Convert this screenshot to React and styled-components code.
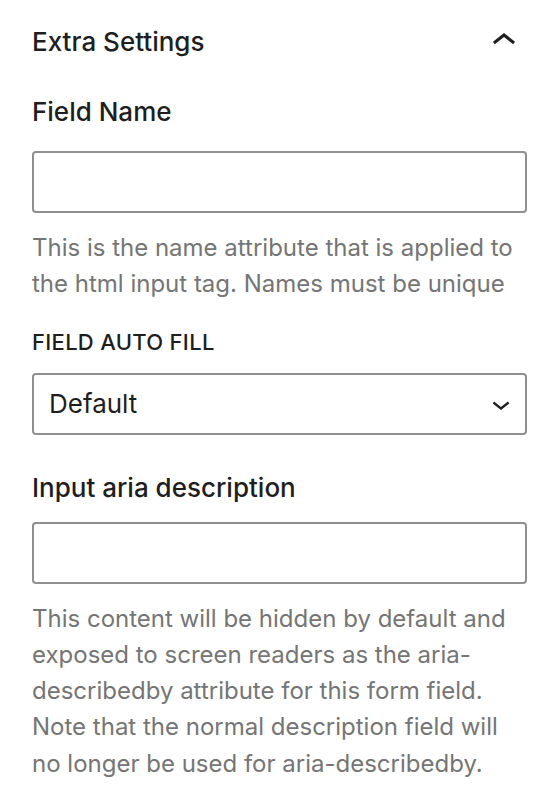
import React from 'react';
import styled, { createGlobalStyle } from 'styled-components';

/****** Global */

const GlobalStyle = createGlobalStyle`
  html, body {
    margin : 0;
    padding : 0;
    background : #ffffff;
  }
  body {
    font-family : Inter, "Liberation Sans", sans-serif;
    color : #1e1e1e;
    -webkit-font-smoothing : antialiased;
  }`

/****** Styled Components */

const Panel = styled.div`
  width : 544px;
  box-sizing : border-box;
  padding : 0 17px 0 32px;
  display : flex;
  flex-direction : column;`

const Header = styled.div`
  display : flex;
  justify-content : space-between;
  align-items : flex-start;
  height : 32px;
  padding-top : 26px;`

const Title = styled.h2`
  margin : 0;
  font-size : 26px;
  line-height : 32px;
  font-weight : 500;`

const ToggleIcon = styled.svg`
  width : 48px;
  height : 48px;
  margin : -9px -1px 0 0;
  fill : #1e1e1e;`

const Label = styled.label`
  display : block;
  margin-top : ${p => p.$top}px;
  font-size : ${p => (p.$caps ? 22 : 26)}px;
  line-height : ${p => (p.$caps ? 28 : 32)}px;
  font-weight : 500;
  text-transform : ${p => (p.$caps ? 'uppercase' : 'none')};
  letter-spacing : ${p => (p.$caps ? '0.3px' : '0')};`

const TextInput = styled.input`
  display : block;
  box-sizing : border-box;
  width : 100%;
  height : 62px;
  margin-top : ${p => p.$top}px;
  padding : 0 15px;
  border : 2px solid #8f8f8f;
  border-radius : 4px;
  font : inherit;
  font-size : 26px;
  outline : none;`

const Help = styled.p`
  margin : ${p => p.$top}px 0 0;
  font-size : 24px;
  line-height : 36.3px;
  color : #757575;`

const SelectBox = styled.div`
  display : flex;
  align-items : center;
  box-sizing : border-box;
  height : 62px;
  margin-top : 17px;
  border : 2px solid #8f8f8f;
  border-radius : 4px;
  padding-right : 6px;`

const Select = styled.select`
  flex : 1;
  height : 100%;
  padding : 0 0 0 15px;
  border : none;
  background : transparent;
  appearance : none;
  font : inherit;
  font-size : 26px;
  color : #1e1e1e;
  outline : none;`

const CaretIcon = styled.svg`
  width : 36px;
  height : 36px;
  flex : none;
  fill : #1e1e1e;`

class App extends React.Component {
  render() {
    return (
      <>
        <GlobalStyle />
        <Panel>
          <Header>
            <Title>Extra Settings</Title>
            <ToggleIcon viewBox="0 0 24 24" aria-hidden="true">
              <path d="M6.5 12.4L12 8l5.5 4.4-.9 1.2L12 10l-4.6 3.6-1-1.2z" />
            </ToggleIcon>
          </Header>

          {/* field name */}
          <Label $top={38} htmlFor="field-name">Field Name</Label>
          <TextInput id="field-name" $top={23} />
          <Help $top={17}>
            This is the name attribute that is applied to the html input tag. Names must be unique
          </Help>

          {/* auto fill */}
          <Label $top={25} $caps htmlFor="auto-fill">Field Auto Fill</Label>
          <SelectBox>
            <Select id="auto-fill" defaultValue="default">
              <option value="default">Default</option>
              <option value="off">Off</option>
              <option value="on">On</option>
            </Select>
            <CaretIcon viewBox="0 0 24 24" aria-hidden="true">
              <path d="M17.5 11.6L12 16l-5.5-4.4.9-1.2L12 14l4.6-3.6 1 1.2z" />
            </CaretIcon>
          </SelectBox>

          {/* aria description */}
          <Label $top={37} htmlFor="aria-desc">Input aria description</Label>
          <TextInput id="aria-desc" $top={18} />
          <Help $top={17}>
            This content will be hidden by default and exposed to screen readers as the aria-describedby attribute for this form field. Note that the normal description field will no longer be used for aria-describedby.
          </Help>
        </Panel>
      </>
    );
  }
}
export default App;
